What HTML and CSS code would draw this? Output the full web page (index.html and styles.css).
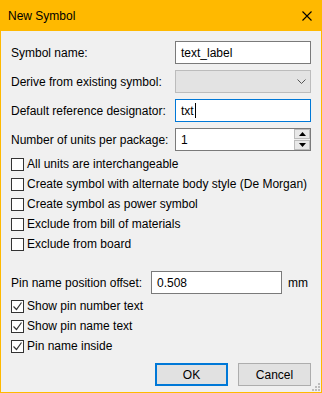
FILE: index.html
```html
<!DOCTYPE html>
<html lang="en">
<head>
    <meta charset="UTF-8">
    <title>New Symbol</title>
    <link rel="stylesheet" href="styles.css">
</head>
<body>

    <!-- Dialog Window -->
    <div class="window">
        <div class="titlebar">
            <span class="title">New Symbol</span>
            <svg class="close" width="10" height="10" viewBox="0 0 10 10">
                <path d="M0.5 0.5 L9.5 9.5 M9.5 0.5 L0.5 9.5" stroke="#000" stroke-width="1.1" fill="none"/>
            </svg>
        </div>

        <div class="content">
            <!-- Main fields -->
            <div class="fields">
                <label class="field-label">Symbol name:</label>
                <div class="input">text_label</div>

                <label class="field-label">Derive from existing symbol:</label>
                <div class="input combo">
                    <svg width="9" height="5" viewBox="0 0 9 5">
                        <path d="M0.5 0.5 L4.5 4.5 L8.5 0.5" stroke="#555" stroke-width="1" fill="none"/>
                    </svg>
                </div>

                <label class="field-label">Default reference designator:</label>
                <div class="input focused">txt<span class="caret"></span></div>

                <label class="field-label">Number of units per package:</label>
                <div class="input spin">
                    <span class="spin-value">1</span>
                    <div class="spin-buttons">
                        <div class="spin-btn">
                            <svg width="7" height="4" viewBox="0 0 7 4"><path d="M0 4 L3.5 0 L7 4 Z" fill="#000"/></svg>
                        </div>
                        <div class="spin-btn">
                            <svg width="7" height="4" viewBox="0 0 7 4"><path d="M0 0 L3.5 4 L7 0 Z" fill="#000"/></svg>
                        </div>
                    </div>
                </div>
            </div>

            <!-- Options -->
            <div class="checks">
                <div class="check-row"><span class="box"></span>All units are interchangeable</div>
                <div class="check-row"><span class="box"></span>Create symbol with alternate body style (De Morgan)</div>
                <div class="check-row"><span class="box"></span>Create symbol as power symbol</div>
                <div class="check-row"><span class="box"></span>Exclude from bill of materials</div>
                <div class="check-row"><span class="box"></span>Exclude from board</div>
            </div>

            <!-- Pin options -->
            <div class="offset-row">
                <label class="offset-label">Pin name position offset:</label>
                <div class="input offset-input">0.508</div>
                <span class="unit">mm</span>
            </div>

            <div class="checks pin-checks">
                <div class="check-row"><span class="box checked"><svg width="11" height="11" viewBox="0 0 11 11"><path d="M1.5 5.5 L4.5 8.5 L9.5 1.5" stroke="#333" stroke-width="1.2" fill="none"/></svg></span>Show pin number text</div>
                <div class="check-row"><span class="box checked"><svg width="11" height="11" viewBox="0 0 11 11"><path d="M1.5 5.5 L4.5 8.5 L9.5 1.5" stroke="#333" stroke-width="1.2" fill="none"/></svg></span>Show pin name text</div>
                <div class="check-row"><span class="box checked"><svg width="11" height="11" viewBox="0 0 11 11"><path d="M1.5 5.5 L4.5 8.5 L9.5 1.5" stroke="#333" stroke-width="1.2" fill="none"/></svg></span>Pin name inside</div>
            </div>

            <!-- Buttons -->
            <div class="buttons">
                <button class="btn default">OK</button>
                <button class="btn">Cancel</button>
            </div>
        </div>

        <svg class="grip" width="9" height="9" viewBox="0 0 9 9">
            <rect x="7" y="1" width="2" height="2" fill="#bcbcbc"/>
            <rect x="4" y="4" width="2" height="2" fill="#bcbcbc"/>
            <rect x="7" y="4" width="2" height="2" fill="#bcbcbc"/>
            <rect x="1" y="7" width="2" height="2" fill="#bcbcbc"/>
            <rect x="4" y="7" width="2" height="2" fill="#bcbcbc"/>
            <rect x="7" y="7" width="2" height="2" fill="#bcbcbc"/>
        </svg>
    </div>

</body>
</html>
```

FILE: styles.css
```css
/* General */
html, body {
    margin: 0;
    padding: 0;
}

body {
    font-family: "Liberation Sans", Arial, sans-serif;
    font-size: 12px;
    color: #000;
    background: #f0f0f0;
    white-space: nowrap;
}

/* Window frame */
.window {
    position: relative;
    width: 322px;
    height: 393px;
    box-sizing: border-box;
    border: 1px solid #ffb900;
    border-top: none;
    background: #f0f0f0;
    display: flex;
    flex-direction: column;
}

.titlebar {
    height: 31px;
    flex-shrink: 0;
    background: #ffb900;
    display: flex;
    align-items: center;
    justify-content: space-between;
    padding: 0 10px 0 8px;
    margin: 0 -1px;
}

.title {
    font-size: 12px;
}

.content {
    padding: 10px 10px 0 10px;
    display: flex;
    flex-direction: column;
}

/* Fields grid */
.fields {
    display: grid;
    grid-template-columns: 164px 1fr;
    row-gap: 6px;
    align-items: center;
}

.input {
    height: 23px;
    box-sizing: border-box;
    border: 1px solid #7a7a7a;
    background: #fff;
    padding: 0 5px;
    display: flex;
    align-items: center;
}

.input.focused {
    border-color: #0078d7;
}

.caret {
    display: inline-block;
    width: 1px;
    height: 15px;
    background: #000;
    margin-left: 1px;
}

.combo {
    background: #e3e3e3;
    border-color: #bcbcbc;
    justify-content: flex-end;
    padding-right: 4px;
}

.spin {
    padding-right: 0;
}

.spin-value {
    flex: 1;
}

.spin-buttons {
    width: 16px;
    height: 21px;
    display: flex;
    flex-direction: column;
    gap: 1px;
    background: #f0f0f0;
}

.spin-btn {
    flex: 1;
    border: 1px solid #bcbcbc;
    background: #e8e8e8;
    display: flex;
    align-items: center;
    justify-content: center;
}

/* Checkbox rows */
.checks {
    margin-top: 3px;
    display: flex;
    flex-direction: column;
}

.check-row {
    height: 20px;
    display: flex;
    align-items: center;
    gap: 3px;
}

.box {
    width: 13px;
    height: 13px;
    flex-shrink: 0;
    box-sizing: border-box;
    border: 1px solid #333;
    background: #fff;
    display: flex;
    align-items: center;
    justify-content: center;
}

.pin-checks {
    margin-top: 2px;
}

/* Offset row */
.offset-row {
    margin-top: 17px;
    display: flex;
    align-items: center;
}

.offset-label {
    width: 140px;
}

.offset-input {
    width: 131px;
}

.unit {
    margin-left: 6px;
}

/* Buttons */
.buttons {
    margin-top: 7px;
    display: flex;
    justify-content: flex-end;
    gap: 10px;
}

.btn {
    width: 73px;
    height: 23px;
    font-family: inherit;
    font-size: 12px;
    color: #000;
    background: #e1e1e1;
    border: 1px solid #adadad;
    padding: 0;
}

.btn.default {
    border: 2px solid #0078d7;
}

/* Resize grip */
.grip {
    position: absolute;
    right: 1px;
    bottom: 1px;
}
```
